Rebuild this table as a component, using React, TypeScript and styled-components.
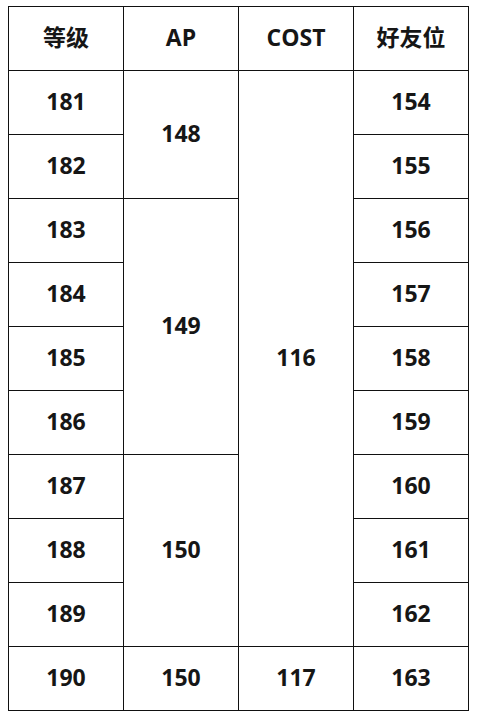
import styled, { createGlobalStyle } from "styled-components";

const GlobalStyle = createGlobalStyle`
  html, body {
    margin: 0;
    padding: 0;
    background: #ffffff;
  }
  body {
    font-family: "Open Sans", "Noto Sans CJK SC", sans-serif;
  }
`;

const Page = styled.div`
  padding: 6px 8px;
`;

const Table = styled.table`
  border-collapse: collapse;
  table-layout: fixed;
  width: 461px;
`;

const Cell = styled.td`
  border: 1.3px solid #111;
  height: 61px;
  padding: 0 0 2px;
  text-align: center;
  vertical-align: middle;
  font-size: 23px;
  font-weight: 700;
  color: #161616;
  line-height: 1.2;
`;

const HeadCell = styled(Cell).attrs({ as: "th" })`
  font-size: 23px;
`;

type Row = { level: number; ap?: [number, number]; cost?: [number, number]; friend: number };

const rows: Row[] = [
  { level: 181, ap: [148, 2], cost: [116, 9], friend: 154 },
  { level: 182, friend: 155 },
  { level: 183, ap: [149, 4], friend: 156 },
  { level: 184, friend: 157 },
  { level: 185, friend: 158 },
  { level: 186, friend: 159 },
  { level: 187, ap: [150, 3], friend: 160 },
  { level: 188, friend: 161 },
  { level: 189, friend: 162 },
  { level: 190, ap: [150, 1], cost: [117, 1], friend: 163 },
];

export default function App() {
  return (
    <Page>
      <GlobalStyle />
      <Table>
        <thead>
          <tr>
            <HeadCell>等级</HeadCell>
            <HeadCell>AP</HeadCell>
            <HeadCell>COST</HeadCell>
            <HeadCell>好友位</HeadCell>
          </tr>
        </thead>
        <tbody>
          {rows.map((r) => (
            <tr key={r.level}>
              <Cell>{r.level}</Cell>
              {r.ap && <Cell rowSpan={r.ap[1]}>{r.ap[0]}</Cell>}
              {r.cost && <Cell rowSpan={r.cost[1]}>{r.cost[0]}</Cell>}
              <Cell>{r.friend}</Cell>
            </tr>
          ))}
        </tbody>
      </Table>
    </Page>
  );
}
